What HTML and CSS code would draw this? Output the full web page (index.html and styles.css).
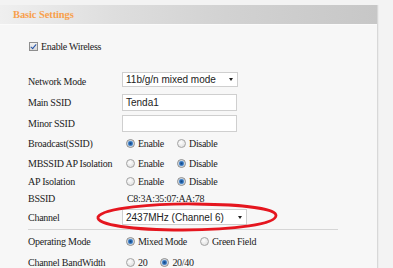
FILE: index.html
```html
<!DOCTYPE html>
<html lang="en">
<head>
<meta charset="utf-8">
<title>Basic Settings</title>
<link rel="stylesheet" href="styles.css">
</head>
<body>
<div class="page">
  <div class="panel">
    <div class="panel-head"><h2 class="panel-title">Basic Settings</h2></div>
    <div class="panel-body">
      <label class="enable-row"><span class="check"></span>Enable Wireless</label>
      <div class="form">
        <div class="row r-net">
          <span class="lbl">Network Mode</span>
          <div class="val"><div class="select sel-mode"><span class="sel-text">11b/g/n mixed mode</span><span class="arrow"></span></div></div>
        </div>
        <div class="row r-main">
          <span class="lbl">Main SSID</span>
          <div class="val"><div class="text-input">Tenda1</div></div>
        </div>
        <div class="row r-minor">
          <span class="lbl">Minor SSID</span>
          <div class="val"><div class="text-input"></div></div>
        </div>
        <div class="row r-bcast">
          <span class="lbl">Broadcast(SSID)</span>
          <div class="val">
            <span class="opt"><span class="radio on"></span>Enable</span>
            <span class="opt"><span class="radio"></span>Disable</span>
          </div>
        </div>
        <div class="row r-mbss">
          <span class="lbl">MBSSID AP Isolation</span>
          <div class="val">
            <span class="opt"><span class="radio"></span>Enable</span>
            <span class="opt"><span class="radio on"></span>Disable</span>
          </div>
        </div>
        <div class="row r-ap">
          <span class="lbl">AP Isolation</span>
          <div class="val">
            <span class="opt"><span class="radio"></span>Enable</span>
            <span class="opt"><span class="radio on"></span>Disable</span>
          </div>
        </div>
        <div class="row r-bssid">
          <span class="lbl">BSSID</span>
          <div class="val"><span class="bssid">C8:3A:35:07:AA:78</span></div>
        </div>
        <div class="row r-chan">
          <span class="lbl">Channel</span>
          <div class="val chan-val">
            <div class="select sel-chan"><span class="sel-text">2437MHz (Channel 6)</span><span class="arrow"></span></div>
            <svg class="circle-mark" width="186" height="34" viewBox="0 0 186 34">
              <path d="M3 17 C 8 8, 60 3.5, 100 4 C 150 4.5, 181 9, 181 15.5 C 181 24, 140 30, 88 30 C 38 30, 1 25, 3 17 Z" fill="none" stroke="#e5161f" stroke-width="2.8"/>
            </svg>
          </div>
        </div>
        <div class="sep"></div>
        <div class="row r-op">
          <span class="lbl">Operating Mode</span>
          <div class="val">
            <span class="opt"><span class="radio on"></span>Mixed Mode</span>
            <span class="opt"><span class="radio"></span>Green Field</span>
          </div>
        </div>
        <div class="row r-bw">
          <span class="lbl">Channel BandWidth</span>
          <div class="val">
            <span class="opt"><span class="radio"></span>20</span>
            <span class="opt"><span class="radio on"></span>20/40</span>
          </div>
        </div>
      </div>
    </div>
  </div>
</div>
</body>
</html>
```

FILE: styles.css
```css
html, body {
  margin: 0;
  padding: 0;
}
body {
  background: #f3f3f3;
  font-family: "Liberation Serif", "Times New Roman", serif;
  font-size: 10px;
  color: #222;
  width: 393px;
  height: 268px;
  overflow: hidden;
}
.page {
  padding-top: 5px;
}
.panel {
  width: 377px;
  height: 263px;
  overflow: hidden;
  background: #f7f7f7;
  border-right: 1px solid #d8d8d8;
  box-shadow: 1px 0 0 #ececec;
}
.panel-head {
  height: 19px;
  background: linear-gradient(to right, #efefef 0%, #dedede 30%, #d2d2d2 60%, #c7c7c7 100%);
  border-bottom: 1px solid #fbfbfb;
  display: flex;
  align-items: center;
  padding-left: 13px;
}
.panel-title {
  margin: 0;
  font-size: 10.5px;
  font-weight: bold;
  color: #f8a04c;
  letter-spacing: -0.1px;
}
.panel-body {
  padding: 11px 0 0 29px;
}
.enable-row {
  display: flex;
  align-items: center;
  height: 20px;
  margin-bottom: 15px;
  letter-spacing: -0.3px;
}
.check {
  width: 9px;
  height: 9px;
  box-sizing: border-box;
  border: 1px solid #8e8e8e;
  background: linear-gradient(#f2f2f2, #d8d8d8);
  margin-right: 3px;
  position: relative;
}
.check::after {
  content: "";
  position: absolute;
  left: 2px;
  top: 0px;
  width: 2px;
  height: 5px;
  border: solid #2453a8;
  border-width: 0 1.5px 1.5px 0;
  transform: rotate(40deg);
}
.form {
  width: 310px;
  margin-left: -1px;
}
.row {
  display: flex;
  align-items: center;
}
.lbl {
  width: 94px;
  flex: none;
  letter-spacing: -0.25px;
}
.val {
  display: flex;
  align-items: center;
  flex: 1;
}
.r-net { height: 20px; }
.r-main { height: 22px; }
.r-minor { height: 20px; }
.r-bcast { height: 21px; }
.r-mbss { height: 18px; }
.r-ap { height: 18px; }
.r-bssid { height: 16px; }
.r-chan { height: 23px; }
.r-op { height: 22px; }
.r-bw { height: 20px; }
.sep {
  height: 1px;
  background: #d6d6d6;
}
.select, .text-input {
  box-sizing: border-box;
  background: #fff;
  border: 1px solid #cfcfcf;
  font-family: "Liberation Sans", Arial, sans-serif;
  font-size: 10px;
  color: #222;
  display: flex;
  align-items: center;
  padding-left: 3px;
}
.sel-mode {
  width: 116px;
  height: 15px;
  margin-top: -3px;
}
.text-input {
  width: 115px;
  height: 17px;
}
.sel-chan {
  width: 125px;
  height: 16px;
  margin-top: -1px;
}
.sel-text {
  flex: 1;
}
.arrow {
  width: 0;
  height: 0;
  border-left: 2.5px solid transparent;
  border-right: 2.5px solid transparent;
  border-top: 3px solid #222;
  margin-right: 4px;
}
.opt {
  display: inline-flex;
  align-items: center;
  margin-right: 9px;
  letter-spacing: -0.3px;
}
.radio {
  width: 9px;
  height: 9px;
  box-sizing: border-box;
  border-radius: 50%;
  border: 1px solid #a3a3a3;
  background: radial-gradient(circle at 40% 35%, #fdfdfd 0, #e4e4e4 70%, #d0d0d0 100%);
  margin: 0 3px 0 4px;
  flex: none;
}
.radio.on {
  border-color: #8b8b8b;
  background: radial-gradient(circle, #14477f 0, #2b6cb8 1.6px, #7aa9d8 2.6px, #e9e9e9 3.2px, #d4d4d4 100%);
}
.bssid {
  margin-left: 5px;
  letter-spacing: -0.3px;
}
.chan-val {
  position: relative;
}
.circle-mark {
  position: absolute;
  left: -27px;
  top: -10px;
  pointer-events: none;
}
```
